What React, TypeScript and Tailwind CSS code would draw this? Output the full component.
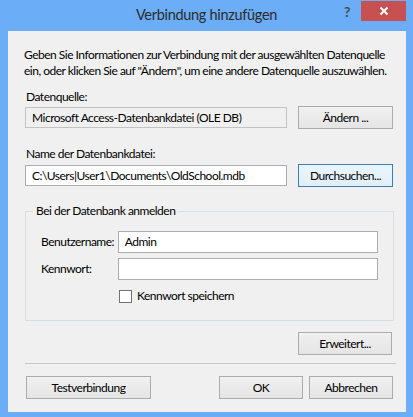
import React from "react";

const btn =
  "flex items-center justify-center h-[23px] border border-[#acacac] bg-gradient-to-b from-[#f0f0f0] to-[#e5e5e5] text-[12px] text-black";

export default function App() {
  return (
    <div className="w-[413px] h-[417px] bg-[#6badf6] flex flex-col font-['Lato',sans-serif] text-black select-none whitespace-nowrap overflow-hidden tracking-[-0.5px]">
      {/* Title bar */}
      <div className="relative h-[31px] flex items-center justify-center shrink-0">
        <span className="text-[14.5px] text-[#2b2b2b] leading-none mt-[-1px] tracking-[-0.3px]">Verbindung hinzufügen</span>
        <span className="absolute left-[344px] top-[4px] text-[14px] font-bold text-[#4a4a4a] leading-[16px]">?</span>
        <div className="absolute left-[361px] top-[1px] w-[45px] h-[20px] bg-[#c75050] flex items-center justify-center">
          <svg width="10" height="10" viewBox="0 0 10 10">
            <path d="M1.5 1.5 L8.5 8.5 M8.5 1.5 L1.5 8.5" stroke="#ffffff" strokeWidth="2" />
          </svg>
        </div>
      </div>

      {/* Client area */}
      <div className="ml-[8px] mr-[7px] h-[381px] bg-[#f0f0f0] flex flex-col pl-[16px] pt-[16px] text-[12px]">
        <p className="leading-[16px]">
          Geben Sie Informationen zur Verbindung mit der ausgewählten Datenquelle
          <br />
          ein, oder klicken Sie auf "Ändern", um eine andere Datenquelle auszuwählen.
        </p>

        <div className="mt-[10px] ml-[2px] leading-[16px]">Datenquelle:</div>
        <div className="mt-[1px] ml-[1px] flex items-center gap-[11px]">
          <div className="w-[262px] h-[21px] border border-[#c3c3c3] bg-[#f0f0f0] flex items-center pl-[6px] leading-none">
            Microsoft Access-Datenbankdatei (OLE DB)
          </div>
          <div className={`${btn} w-[95px]`}>Ändern ...</div>
        </div>

        <div className="mt-[17px] ml-[2px] leading-[16px]">Name der Datenbankdatei:</div>
        <div className="mt-[2px] ml-[1px] flex items-center gap-[11px]">
          <div className="w-[262px] h-[21px] border border-[#abadb3] bg-white flex items-center pl-[6px] leading-none">
            C:\Users|User1\Documents\OldSchool.mdb
          </div>
          <div className="flex items-center justify-center h-[23px] w-[95px] border border-[#3c7fb1] bg-gradient-to-b from-[#eaf6fd] to-[#e1eef8] text-[12px]">
            Durchsuchen...
          </div>
        </div>

        <div className="relative mt-[24px] ml-[1px] w-[369px] h-[110px] border border-[#d5dfe5] px-[15px] pt-[19px] shrink-0">
          <span className="absolute left-[7px] top-[-9px] px-[3px] leading-[16px] bg-[#f0f0f0]">Bei der Datenbank anmelden</span>
          <div className="flex items-center">
            <span className="w-[77px]">Benutzername:</span>
            <div className="w-[261px] h-[22px] border border-[#abadb3] bg-white flex items-center pl-[6px] leading-none">
              Admin
            </div>
          </div>
          <div className="mt-[5px] flex items-center">
            <span className="w-[77px]">Kennwort:</span>
            <div className="w-[261px] h-[22px] border border-[#abadb3] bg-white"></div>
          </div>
          <div className="mt-[8px] ml-[78px] flex items-center gap-[5px]">
            <div className="w-[13px] h-[13px] border border-[#707070] bg-white"></div>
            <span className="leading-[16px]">Kennwort speichern</span>
          </div>
        </div>

        <div className="mt-[11px] flex justify-end pr-[14px]">
          <div className={`${btn} w-[94px]`}>Erweitert...</div>
        </div>

        <div className="mt-[8px] ml-[1px] mr-[10px] h-[1px] bg-[#c8c8c8]"></div>

        <div className="mt-[12px] ml-[2px] flex items-center">
          <div className={`${btn} w-[125px]`}>Testverbindung</div>
          <div className={`${btn} w-[84px] ml-[68px]`}>OK</div>
          <div className={`${btn} w-[84px] ml-[6px]`}>Abbrechen</div>
        </div>
      </div>
    </div>
  );
}
